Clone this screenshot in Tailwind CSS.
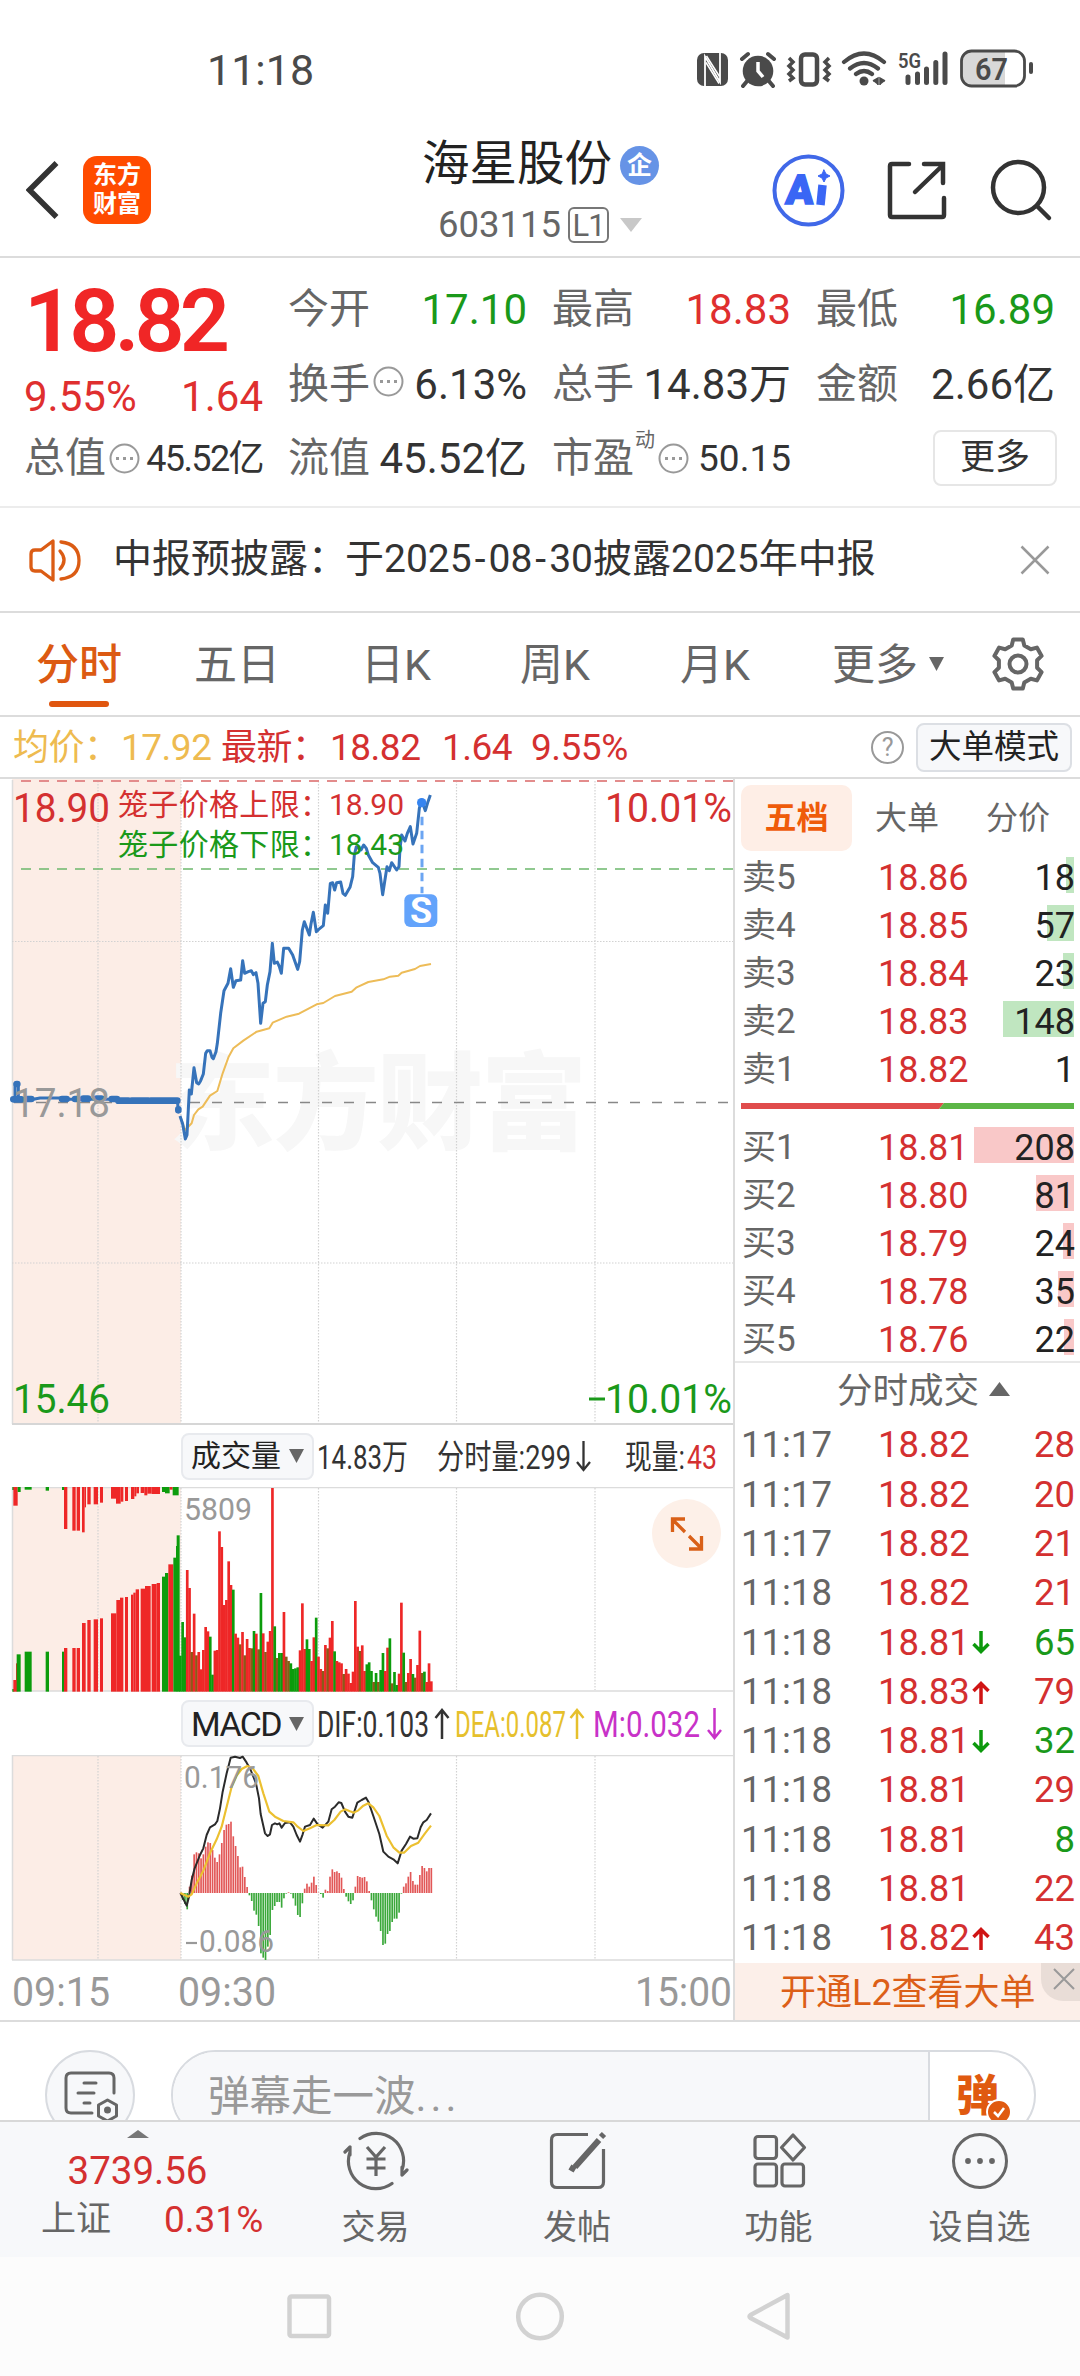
<!DOCTYPE html>
<html lang="zh-CN">
<head>
<meta charset="utf-8">
<title>海星股份 603115</title>
<script src="https://cdn.jsdelivr.net/npm/@tailwindcss/browser@4"></script>
</head>
<body class="w-[1080px] h-[2376px] overflow-hidden bg-white font-[Roboto,'Noto_Sans_CJK_SC',sans-serif] text-[#333] leading-none">
<div class="flex flex-col w-[1080px] h-[2376px] whitespace-nowrap">

<!-- status bar -->
<div class="flex items-center justify-between h-[92px] pt-[48px] pl-[207px] pr-[46px] text-[#4a4a4a] shrink-0">
  <span class="text-[43px]">11:18</span>
  <svg class="w-[340px] h-[44px]" viewBox="694 48 340 44" fill="none" stroke="#4a4a4a">
    <rect x="697" y="53" width="31" height="33" rx="7" fill="#4a4a4a" stroke="none"/>
    <path d="M705 86V56.500L720 82V53" stroke="#fff" stroke-width="1.800"/>
    <path d="M706 62.500l13 21M706.500 56l13 20.500" stroke="#fff" stroke-width="1.500"/>
    <circle cx="758" cy="71" r="15.300" fill="#4a4a4a" stroke="none"/>
    <path d="M742 59l6-5M774 59l-6-5M748 80l-5 6M768 80l5 6" stroke-width="4" stroke-linecap="round"/>
    <path d="M758 62v9l5 6" stroke="#fff" stroke-width="3.500"/>
    <rect x="801" y="54.500" width="16" height="30" rx="4" stroke-width="4.500"/>
    <path d="M789 58l4 4-4 4 4 4-4 4 4 4-4 3M829 58l-4 4 4 4-4 4 4 4-4 4 4 3" stroke-width="3.500"/>
    <path d="M844 62q20-17 40 0M850 68.500q14-11 28 0M856 74q8-6 16 0" stroke-width="4.200" stroke-linecap="round"/>
    <circle cx="864" cy="81" r="4.500" fill="#4a4a4a" stroke="none"/>
    <path d="M873 81l5-3v7M885 81l-5-3v7" fill="#4a4a4a" stroke-width="1.500"/>
    <text x="898" y="68" font-size="21" font-weight="600" fill="#4a4a4a" stroke="none" textLength="23" lengthAdjust="spacingAndGlyphs">5G</text>
    <path d="M908 77v5.500M917.500 74v8.500M926.500 69v13.500M935.800 62.500v20M945 54v28.500" stroke-width="5" stroke-linecap="round"/>
    <path d="M968 52h37v33h-37q-6 0-6-8v-17q0-8 6-8z" fill="#d8d8d8" stroke="none"/>
    <rect x="961.500" y="51" width="63" height="35" rx="10" stroke-width="2.800"/>
    <path d="M1031 64v8" stroke-width="4" stroke-linecap="round"/>
    <text x="975" y="79.500" font-size="31" font-weight="600" fill="#4a4a4a" stroke="none" textLength="33" lengthAdjust="spacingAndGlyphs">67</text>
  </svg>
</div>

<!-- title bar -->
<div class="flex h-[166px] border-b-2 border-[#dcdcdc] shrink-0">
  <div class="flex items-start w-[399px] pt-[64px] pl-[26px]">
    <svg class="w-[34px] h-[70px] mt-[-1px]" viewBox="0 0 34 70" fill="none" stroke="#333" stroke-width="5.500"><path d="M30.500 8L3.500 35l27 27"/></svg>
    <div class="ml-[23px] w-[68px] h-[68px] rounded-[14px] bg-[#ff4b00] text-white font-bold text-[24px] leading-[29px] flex flex-col items-center justify-center"><span>东方</span><span>财富</span></div>
  </div>
  <div class="flex flex-col items-center w-[283px] pt-[49px]">
    <div class="flex items-center h-[48px] text-[47.500px] text-[#222] gap-[8px]"><span>海星股份</span>
      <span class="flex items-center justify-center w-[39px] h-[39px] rounded-full bg-[#6693e6] text-white text-[25px] font-bold">企</span></div>
    <div class="flex items-center mt-[17px] h-[38px] text-[36.500px] text-[#666]">
      <span>603115</span>
      <span class="ml-[7px] w-[41px] h-[36px] border-2 border-[#777] rounded-[6px] text-[31px] leading-[33px] text-center tracking-[-1px]">L1</span>
      <svg class="ml-[10px] w-[24px] h-[16px]" viewBox="0 0 24 16"><path d="M1 1h22L12 15z" fill="#c8c8c8"/></svg>
    </div>
  </div>
  <svg class="w-[330px] h-[100px] mt-[48px] ml-[68px]" viewBox="750 140 330 100" fill="none" stroke="#333" stroke-width="4.500" stroke-linecap="round">
    <circle cx="808.500" cy="190.500" r="34" stroke="#4068e8" stroke-width="4"/>
    <text x="786" y="204" font-family="Roboto" font-size="41" font-weight="900" fill="#3a66f5" stroke="#3a66f5" stroke-width="1.500" transform="skewX(-4)" style="transform-origin:808px 190px">A</text>
    <path d="M822.500 185l-2 20" stroke="#3a66f5" stroke-width="8.500" stroke-linecap="butt"/>
    <path d="M824 170l2 4 4 2-4 2-2 4-2-4-4-2 4-2z" fill="#3a66f5" stroke="#3a66f5" stroke-width="1"/>
    <path d="M909 164h-17q-2 0-2 2v49q0 2 2 2h50q2 0 2-2v-17M924 164h19v19M943 165l-28 27"/>
    <circle cx="1018.500" cy="187.500" r="25.500"/><path d="M1037 206l12 12"/>
  </svg>
</div>

<!-- quote summary -->
<div class="grid grid-cols-[239px_239px_239px_239px] gap-x-[25px] px-[24px] pt-[14px] h-[250px] border-b-2 border-[#ececec] text-[42px] text-[#333] shrink-0">
  <div class="flex flex-col">
    <div class="h-[100px] pt-[6px] text-[88px] leading-[86px] font-semibold text-[#f02626] tracking-[-5px]">18.82</div>
    <div class="flex justify-between items-center h-[50px] text-[#df2f2f]"><span>9.55%</span><span>1.64</span></div>
    <div class="flex items-center h-[73px] text-[36px]"><span class="text-[41px] text-[#666]">总值</span>
      <svg class="w-[31px] h-[31px] ml-[3px]" viewBox="0 0 31 31"><circle cx="15.500" cy="15.500" r="14" fill="none" stroke="#999" stroke-width="2"/><path d="M7 14h3v3h-3zM14 14h3v3h-3zM21 14h3v3h-3z" fill="#999"/></svg>
      <span class="ml-auto tracking-[-1.600px]">45.52亿</span></div>
  </div>
  <div>
    <div class="flex justify-between items-center h-[75px] text-[#1a991a]"><span class="text-[41px] text-[#666]">今开</span><span>17.10</span></div>
    <div class="flex items-center h-[75px]"><span class="text-[41px] text-[#666]">换手</span>
      <svg class="w-[31px] h-[31px] ml-[3px] mt-[-6px]" viewBox="0 0 31 31"><circle cx="15.500" cy="15.500" r="14" fill="none" stroke="#999" stroke-width="2"/><path d="M7 14h3v3h-3zM14 14h3v3h-3zM21 14h3v3h-3z" fill="#999"/></svg>
      <span class="ml-auto">6.13%</span></div>
    <div class="flex justify-between items-center h-[73px]"><span class="text-[41px] text-[#666]">流值</span><span>45.52亿</span></div>
  </div>
  <div>
    <div class="flex justify-between items-center h-[75px] text-[#df2f2f]"><span class="text-[41px] text-[#666]">最高</span><span>18.83</span></div>
    <div class="flex justify-between items-center h-[75px]"><span class="text-[41px] text-[#666]">总手</span><span>14.83万</span></div>
    <div class="flex items-center h-[73px] text-[37px]"><span class="text-[41px] text-[#666]">市盈</span><span class="text-[20px] text-[#666] mt-[-37px] ml-[1px]">动</span>
      <svg class="w-[31px] h-[31px] ml-[3px]" viewBox="0 0 31 31"><circle cx="15.500" cy="15.500" r="14" fill="none" stroke="#999" stroke-width="2"/><path d="M7 14h3v3h-3zM14 14h3v3h-3zM21 14h3v3h-3z" fill="#999"/></svg>
      <span class="ml-auto">50.15</span></div>
  </div>
  <div>
    <div class="flex justify-between items-center h-[75px] text-[#1a991a]"><span class="text-[41px] text-[#666]">最低</span><span>16.89</span></div>
    <div class="flex justify-between items-center h-[75px]"><span class="text-[41px] text-[#666]">金额</span><span>2.66亿</span></div>
    <div class="flex items-center justify-end h-[72px]"><span class="w-[124px] h-[56px] mr-[-2px] border-2 border-[#e6e6e6] rounded-[8px] text-[35px] leading-[51px] text-center">更多</span></div>
  </div>
</div>

<!-- notice -->
<div class="flex items-center h-[105px] border-b-2 border-[#dcdcdc] pl-[28px] pr-[30px] shrink-0">
  <svg class="w-[54px] h-[46px]" viewBox="28 536 54 46" fill="none" stroke="#db5c14" stroke-width="3.300" stroke-linejoin="round"><path d="M41 549h-6q-4 0-4 4v13q0 4 4 4h6l12 9v-39z"/><path d="M60 550q8 9 0 18M61 541q18 2 18 18.500t-18 18.500" stroke-linecap="round"/></svg>
  <span class="ml-[31px] text-[39px]">中报预披露：<span class="ml-[-2px]">于</span>2025<span class="mx-[3px]">-</span>08<span class="mx-[3px]">-</span>30披露2025年中报</span>
  <svg class="ml-auto w-[30px] h-[30px]" viewBox="0 0 30 30" stroke="#999" stroke-width="2.500"><path d="M1.500 1.500l27 27M28.500 1.500l-27 27"/></svg>
</div>

<!-- period tabs -->
<div class="flex items-center h-[104px] border-b-2 border-[#dcdcdc] pt-[2px] pl-[36px] text-[43px] text-[#666] shrink-0">
  <span class="relative w-[158px] text-[#dc5a12] font-medium">分时<span class="absolute left-[13px] top-[57px] w-[60px] h-[6px] rounded-full bg-[#e0560f]"></span></span>
  <span class="w-[167px]">五日</span><span class="w-[159px]">日K</span><span class="w-[160px]">周K</span><span class="w-[152px]">月K</span><span class="w-[97px]">更多</span>
  <svg class="w-[15px] h-[14px] mt-[-2px]" viewBox="0 0 15 14"><path d="M0 0h15L7.500 14z" fill="#666"/></svg>
  <svg class="ml-[47px] w-[54px] h-[54px] mt-[-2px]" viewBox="-27 -27 54 54" fill="none" stroke="#666" stroke-width="4" stroke-linejoin="round"><path id="gear" d=""/><circle r="8.500"/></svg>
</div>

<!-- averages -->
<div class="flex items-center h-[62px] pt-[1px] pl-[13px] pr-[8px] text-[37px] text-[#d43030] tracking-[-0.500px] border-b-2 border-[#dcdcdc] shrink-0">
  <span class="w-[108px] text-[36px] text-[#eebb50]">均价：</span><span class="w-[100px] text-[#eebb50]">17.92</span>
  <span class="w-[109px] text-[36px]">最新：</span><span class="w-[112px]">18.82</span><span class="w-[89px]">1.64</span><span>9.55%</span>
  <span class="ml-auto flex items-center justify-center w-[33px] h-[33px] rounded-full border-2 border-[#999] text-[#999] text-[25px]">?</span>
  <span class="ml-[12px] w-[156px] h-[49px] rounded-[8px] border-2 border-[#dcdfe4] bg-[#f7f8fa] text-[32.500px] leading-[44px] tracking-normal text-center text-[#222]">大单模式</span>
</div>

<!-- charts and order book -->
<div class="flex h-[1243px] border-b-2 border-[#dcdcdc] shrink-0">
  <div class="w-[735px] flex flex-col border-r-2 border-[#dcdcdc] shrink-0">
    <svg class="w-[733px] h-[646px] shrink-0" viewBox="0 779 733 646" fill="none">
      <rect x="12" y="779" width="169" height="645" fill="#fcede6"/>
      <path d="M12.500 780v644" stroke="#dcdcdc" stroke-width="1.500"/>
      <text x="169" y="1141" font-family="'Noto Sans CJK SC'" font-weight="900" font-size="106" fill="#f7f7f7" textLength="418">东方财富</text>
      <path d="M98 781v642M181 781v642M318.500 781v642M456.500 781v642M595 781v642M12 941.500h721M12 1263h721" stroke="#d2d2d2" stroke-width="1.200" stroke-dasharray="1.500 1.500"/>
      <path d="M21 781h712" stroke="#e38c8c" stroke-width="2" stroke-dasharray="10 8"/>
      <path d="M21 869h712" stroke="#6cb86c" stroke-width="1.600" stroke-dasharray="10 8"/>
      <path d="M14 1102.500h719" stroke="#888" stroke-width="1.600" stroke-dasharray="10 12"/>
      <path d="M12 1424h721" stroke="#d6d6d6" stroke-width="2"/>
      <g transform="translate(0 770) scale(.33333)" stroke-linejoin="round">
        <path d="M37 988H55V940H45V988H100L120 984H180L210 988H345L360 992H532L535 1020" stroke="#3673ba" stroke-width="9"/>
        <path d="M50 942h2M40 988h24M82 987h12M186 987h14M225 987h8M250 986h14M290 986h14M335 987h16M355 992h30M395 992h50M452 992h80M535 1018v3" stroke="#3673ba" stroke-width="20" stroke-linecap="round"/>
        <polyline points="541,1040 555,1080 575,1060 582,1035 595,1018 608,1010 630,977 652,963 668,910 686,860 700,835 730,812 770,785 808,775 818,758 860,740 897,731 950,703 970,699 1005,678 1055,665 1070,652 1105,636 1150,628 1170,620 1195,617 1205,608 1245,597 1260,588 1293,582" stroke="#edbc58" stroke-width="6"/>
        <polyline points="540,1038 548,1062 556,1107 561,1095 568,960 574,972 582,893 590,938 596,942 602,932 610,912 617,850 622,842 630,842 636,862 640,866 648,845 652,820 662,730 672,662 684,640 692,596 700,652 708,632 722,630 728,572 734,610 745,605 754,602 760,614 768,608 774,640 782,760 789,700 796,695 802,645 810,605 817,520 823,580 832,576 838,590 844,610 851,535 866,535 878,555 893,598 899,575 907,480 913,455 928,495 933,462 940,427 949,485 956,478 970,467 976,405 983,430 991,340 998,338 1004,360 1010,338 1022,336 1029,370 1036,376 1050,352 1058,320 1063,255 1069,230 1083,240 1091,225 1099,235 1105,255 1118,278 1135,292 1140,310 1148,374 1154,335 1161,290 1168,302 1175,278 1190,300 1197,290 1200,235 1205,195 1215,213 1222,190 1231,170 1239,222 1250,190 1258,115 1265,90 1276,122 1284,95 1291,75" stroke="#3673ba" stroke-width="9"/>
        <circle cx="1265" cy="98" r="14" fill="#3584f0"/>
        <path d="M1266 140V370" stroke="#6ba5f2" stroke-width="9" stroke-dasharray="26 16"/>
        <rect x="1213" y="373" width="99" height="98" rx="18" fill="#63a3fb"/>
      </g>
      <g font-family="Roboto,'Noto Sans CJK SC'">
        <text x="421" y="923" text-anchor="middle" font-size="36" font-weight="700" fill="#fff">S</text>
        <g font-size="40">
          <text x="13" y="822" fill="#d43030" textLength="97" lengthAdjust="spacingAndGlyphs">18.90</text>
          <text x="605" y="822" fill="#d43030" textLength="127" lengthAdjust="spacingAndGlyphs">10.01%</text>
          <text x="13" y="1117" fill="#999" textLength="97" lengthAdjust="spacingAndGlyphs">17.18</text>
          <text x="13" y="1413" fill="#1a991a" textLength="97" lengthAdjust="spacingAndGlyphs">15.46</text>
          <text x="605" y="1413" fill="#1a991a" textLength="127" lengthAdjust="spacingAndGlyphs">10.01%</text>
          <path d="M589 1399h16" stroke="#1a991a" stroke-width="3"/>
        </g>
        <g font-size="30">
          <text x="118" y="815" fill="#d43030" textLength="212">笼子价格上限：</text><text x="329" y="815" fill="#d43030" textLength="75">18.90</text>
          <text x="118" y="855" fill="#1a991a" textLength="212">笼子价格下限：</text><text x="329" y="855" fill="#1a991a" textLength="75">18.43</text>
        </g>
      </g>
    </svg>

    <div class="flex items-center h-[62px] pl-[181px] shrink-0">
      <div class="flex items-center justify-between w-[133px] h-[47px] px-[8px] rounded-[8px] border-2 border-[#e8eaee] bg-[#f7f8fa] text-[30px] text-[#222]"><span>成交量</span><svg class="w-[15px] h-[14px]" viewBox="0 0 15 14"><path d="M0 0h15L7.500 14z" fill="#666"/></svg></div>
      <svg class="w-[415px] h-[60px]" viewBox="314 1425 415 60" font-family="Roboto,'Noto Sans CJK SC'" font-size="34" fill="#333">
        <text x="317" y="1468" textLength="91" lengthAdjust="spacingAndGlyphs">14.83万</text>
        <text x="437" y="1468" textLength="134" lengthAdjust="spacingAndGlyphs">分时量:299</text>
        <path d="M583.500 1440v29M577 1461l6.500 8 6.500-8" fill="none" stroke="#333" stroke-width="2.300"/>
        <text x="625" y="1468" textLength="60" lengthAdjust="spacingAndGlyphs">现量:</text>
        <text x="687" y="1468" fill="#d43030" textLength="30" lengthAdjust="spacingAndGlyphs">43</text>
      </svg>
    </div>

    <div class="relative h-[205px] shrink-0">
      <svg class="w-[733px] h-[205px]" viewBox="0 1487 733 205" fill="none">
        <rect x="12" y="1487" width="169" height="204" fill="#fcede6"/>
        <path d="M12.500 1487v204M12 1487.500h721M12 1691h721" stroke="#dcdcdc" stroke-width="1.500"/>
        <path d="M98 1488v202M181 1488v202M318.500 1488v202M456.500 1488v202M595 1488v202" stroke="#d2d2d2" stroke-width="1.200" stroke-dasharray="1.500 1.500"/>
        <g id="volume" transform="translate(0 1470) scale(.33333)"></g>
        <text x="184" y="1520" font-family="Roboto" font-size="31" fill="#999" textLength="68" lengthAdjust="spacingAndGlyphs">5809</text>
      </svg>
      <div class="absolute left-[652px] top-[12px] w-[69px] h-[69px] rounded-full bg-[#fdf0e8] flex items-center justify-center">
        <svg class="w-[36px] h-[36px]" viewBox="0 0 36 36" fill="none" stroke="#d96018" stroke-width="3.300"><path d="M16 3H3.500v13M4 4l12 12M20 33h12.500V20M32 32L20 20"/></svg>
      </div>
    </div>

    <div class="flex items-center h-[63px] pl-[181px] shrink-0">
      <div class="flex items-center justify-between w-[133px] h-[47px] px-[8px] rounded-[8px] border-2 border-[#e8eaee] bg-[#f7f8fa] text-[34px] tracking-[-1.600px] text-[#222]"><span>MACD</span><svg class="w-[15px] h-[14px]" viewBox="0 0 15 14"><path d="M0 0h15L7.500 14z" fill="#666"/></svg></div>
      <svg class="w-[415px] h-[60px]" viewBox="314 1693 415 60" font-family="Roboto" font-size="37" fill="#333">
        <text x="317" y="1736" textLength="112" lengthAdjust="spacingAndGlyphs">DIF:0.103</text>
        <text x="455" y="1736" fill="#e6c02c" textLength="111" lengthAdjust="spacingAndGlyphs">DEA:0.087</text>
        <text x="593" y="1736" fill="#c832c8" textLength="107" lengthAdjust="spacingAndGlyphs">M:0.032</text>
        <g fill="none" stroke-width="2.500"><path d="M442 1738v-29M435.500 1717l6.500-8 6.500 8" stroke="#333"/><path d="M577 1738v-29M570.500 1717l6.500-8 6.500 8" stroke="#e6c02c"/><path d="M714.500 1707v29M708 1729l6.500 8 6.500-8" stroke="#c832c8"/></g>
      </svg>
    </div>

    <svg class="w-[733px] h-[265px] shrink-0" viewBox="0 1755 733 265" fill="none">
      <rect x="12" y="1755" width="169" height="205" fill="#fcede6"/>
      <path d="M12.500 1755v205M12 1755.500h721M12 1960h721" stroke="#dcdcdc" stroke-width="1.500"/>
      <path d="M98 1756v203M181 1756v203M318.500 1756v203M456.500 1756v203M595 1756v203" stroke="#d2d2d2" stroke-width="1.200" stroke-dasharray="1.500 1.500"/>
      <g transform="translate(0 1740) scale(.33333)" stroke-linejoin="round">
        <g id="macd"></g>
        <polyline points="541,459 560,497 567,470 575,420 584,385 600,345 610,325 620,285 630,262 645,253 652,243 660,205 668,155 680,100 692,53 705,50 720,54 728,50 740,68 752,90 768,130 777,175 782,222 795,280 803,288 810,283 816,255 825,250 832,253 838,250 845,263 855,249 870,247 880,260 890,285 900,305 908,283 915,260 930,255 941,236 953,253 968,263 985,245 995,208 1005,200 1016,187 1024,189 1035,215 1045,230 1057,233 1072,188 1085,180 1098,173 1106,187 1120,228 1138,282 1150,335 1165,350 1180,358 1193,370 1205,332 1218,312 1230,290 1240,296 1252,295 1262,262 1270,247 1280,240 1293,220" stroke="#2b2b2b" stroke-width="6"/>
        <polyline points="541,459 565,470 575,463 590,430 610,392 632,335 650,298 665,260 680,200 695,140 710,107 725,87 742,78 758,85 775,108 790,160 808,215 825,230 850,243 880,247 893,260 910,273 930,265 950,255 985,256 1003,240 1022,215 1035,208 1050,214 1062,218 1075,211 1090,197 1105,190 1120,202 1138,228 1160,287 1180,322 1198,338 1212,338 1233,318 1255,308 1275,280 1293,257" stroke="#ecc030" stroke-width="6.500"/>
      </g>
      <g font-family="Roboto" fill="#999">
        <g font-size="31"><text x="184" y="1788" textLength="75" lengthAdjust="spacingAndGlyphs">0.176</text><text x="199" y="1952" textLength="75" lengthAdjust="spacingAndGlyphs">0.086</text></g>
        <path d="M186 1943h11" stroke="#999" stroke-width="2.200"/>
        <g font-size="40"><text x="12" y="2006" textLength="98" lengthAdjust="spacingAndGlyphs">09:15</text><text x="178" y="2006" textLength="98" lengthAdjust="spacingAndGlyphs">09:30</text><text x="635" y="2006" textLength="97" lengthAdjust="spacingAndGlyphs">15:00</text></g>
      </g>
    </svg>
  </div>

  <!-- order book -->
  <div class="w-[345px] flex flex-col shrink-0">
    <div class="flex pt-[6px] h-[73px] pl-[6px] text-[32px] leading-[67px] text-[#666] shrink-0">
      <span class="w-[111px] h-[66px] rounded-[10px] bg-[#feeee6] text-[#ef5b0a] font-bold text-center">五档</span><span class="ml-[23px]">大单</span><span class="ml-[47px]">分价</span>
    </div>
    <div id="asks"></div>
    <svg class="mt-[11px] mb-[13px] ml-[6px] w-[333px] h-[6px] shrink-0" viewBox="0 0 333 6"><path d="M0 0h203l-5 6H0z" fill="#e04c4c"/><path d="M203 0h130v6H198z" fill="#5cb646"/></svg>
    <div id="bids"></div>
    <div class="flex items-center gap-[10px] h-[60px] border-t-2 border-[#e8e8e8] text-[35.500px] text-[#666] pl-[102px] mt-[-1px] shrink-0"><span>分时成交</span><svg class="w-[21px] h-[14px] mb-[7px]" viewBox="0 0 21 14"><path d="M0 14L10.500 0 21 14z" fill="#666"/></svg></div>
    <div id="trades"></div>
    <div class="relative flex-1 flex items-center bg-[#fcefe9] pt-[2px] pl-[45px] text-[36px] text-[#dc5f18]"><span>开通L2查看大单</span>
      <span class="absolute right-0 top-0 w-[39px] h-[38px] rounded-bl-[22px] bg-[#e9ddd7] flex items-center justify-center"><svg class="w-[22px] h-[22px] mt-[-6px] ml-[6px]" viewBox="0 0 22 22" stroke="#999" stroke-width="2"><path d="M1 1l20 20M21 1L1 21"/></svg></span>
    </div>
  </div>
</div>

<!-- comment bar -->
<div class="flex items-start h-[98px] pt-[28px] pl-[45px] overflow-hidden shrink-0">
  <div class="w-[90px] h-[90px] rounded-full border-2 border-[#d8dbe0] bg-[#f7f8fa] shrink-0">
    <svg class="w-[86px] h-[86px]" viewBox="47 2052 86 86" fill="none" stroke="#666" stroke-width="3" stroke-linecap="round" stroke-linejoin="round"><path d="M92 2113H71q-5 0-5-5v-30q0-5 5-5h38q5 0 5 5v15M84 2083h12M78 2093h16M84 2103h6"/><path d="M107.500 2100l9 5v11l-9 5-9-5v-11z"/><circle cx="107.500" cy="2110" r="2" fill="#666"/></svg>
  </div>
  <div class="ml-[36px] flex w-[865px] h-[90px] rounded-full border-2 border-[#d8dbe0] overflow-hidden shrink-0">
    <div class="w-[757px] h-full bg-[#f7f8fa] border-r-2 border-[#d8dbe0] pl-[35px] text-[41.500px] leading-[89px] text-[#999]">弹幕走一波<span class="tracking-[4px]">...</span></div>
    <div class="pl-[26px] relative text-[43px] leading-[88px] font-black text-[#e05a10]">弹<svg class="absolute left-[56px] top-[47px] w-[26px] h-[26px]" viewBox="-13 -13 26 26"><circle r="12" fill="#e05a10" stroke="#fff" stroke-width="2"/><path d="M-5 0l4 4 6-8" fill="none" stroke="#fff" stroke-width="2.500"/></svg></div>
  </div>
</div>

<!-- toolbar -->
<div class="flex h-[137px] border-t-2 border-[#d8d8d8] bg-[#f7f8fa] text-[34px] text-[#666] shrink-0">
  <div class="w-[275px] flex flex-col items-center pt-[8px]">
    <svg class="w-[22px] h-[8px]" viewBox="0 0 22 8"><path d="M0 8L11 0l11 8z" fill="#777"/></svg>
    <span class="mt-[14px] text-[38.500px] text-[#d43030]">3739.56</span>
    <div class="flex w-full pl-[41px] mt-[10px] items-center h-[38px]"><span class="text-[35px]">上证</span><span class="ml-[53px] text-[37px] text-[#d43030]">0.31%</span></div>
  </div>
  <div class="w-[201px] flex flex-col items-center pt-[7px]">
    <svg class="w-[66px] h-[64px]" viewBox="-33 -32 66 64" fill="none" stroke="#666" stroke-width="3.200" stroke-linecap="round"><path d="M-16 -22.500A27.500 27.500 0 0 1 26 9M26 14l5-5M26 14v-8M16 22.500A27.500 27.500 0 0 1-26 -9M-26 -14l-5 5M-26 -14v8"/><path d="M-9 -14L0 -4 9 -14M0 -4V15M-9.500 -2h19M-9.500 7h19" stroke-linecap="butt"/></svg>
    <span class="mt-[17px]">交易</span>
  </div>
  <div class="w-[202px] flex flex-col items-center pt-[7px]">
    <svg class="w-[66px] h-[64px]" viewBox="-33 -32 66 64" fill="none" stroke="#666" stroke-width="3.200"><path d="M11 -26.500H-20q-5.500 0-5.500 5.500v42q0 5.500 5.500 5.500h41q5.500 0 5.500-5.500V-12"/><path d="M22 -21L-2 6M-6 10l3-5" stroke-width="6"/><path d="M24 -24l3-3" stroke-width="6"/></svg>
    <span class="mt-[17px]">发帖</span>
  </div>
  <div class="w-[201px] flex flex-col items-center pt-[7px]">
    <svg class="w-[66px] h-[64px]" viewBox="-33 -32 66 64" fill="none" stroke="#666" stroke-width="3.200" stroke-linejoin="round"><rect x="-24" y="-24.500" width="21.500" height="22" rx="3"/><rect x="-24" y="3" width="21.500" height="22" rx="3"/><rect x="3" y="3" width="21.500" height="22" rx="3"/><path d="M14 -26l11.500 12.500L14 -1 2.500 -13.500z"/></svg>
    <span class="mt-[17px]">功能</span>
  </div>
  <div class="w-[201px] flex flex-col items-center pt-[7px]">
    <svg class="w-[66px] h-[64px]" viewBox="-33 -32 66 64" fill="none" stroke="#666" stroke-width="3"><circle r="26.500"/><g fill="#666" stroke="none"><circle cx="-12" r="2.900"/><circle r="2.900"/><circle cx="12" r="2.900"/></g></svg>
    <span class="mt-[17px]">设自选</span>
  </div>
</div>

<!-- system navigation -->
<div class="flex-1 bg-[#fcfcfc]">
  <svg class="w-[1080px] h-[120px]" viewBox="0 2256 1080 120" fill="none" stroke="#d2d2d2" stroke-width="4.500" stroke-linejoin="round"><rect x="289.500" y="2295.500" width="39.500" height="39.500" rx="2"/><circle cx="540" cy="2315.500" r="21.800"/><path d="M787.500 2294v42.500L750.500 2317q-2-1.500 0-3z"/></svg>
</div>
</div>

<script>
const NS = 'http://www.w3.org/2000/svg';
const C = {R: '#ee2727', G: '#0c9c0c', B: '#8c5a18'};
function rect(parent, x, y, w, h, fill) {
  const r = document.createElementNS(NS, 'rect');
  for (const [k, v] of Object.entries({x, y, width: w, height: h, fill})) r.setAttribute(k, v);
  parent.appendChild(r);
}

// settings gear outline
let pts = [];
for (let i = 0; i < 6; i++) {
  for (const [da, r] of [[-19, 19.5], [-11, 25], [11, 25], [19, 19.5]]) {
    const a = (i * 60 - 90 + da) * Math.PI / 180;
    pts.push((r * Math.cos(a)).toFixed(1) + ' ' + (r * Math.sin(a)).toFixed(1));
  }
}
document.getElementById('gear').setAttribute('d', 'M' + pts.join('L') + 'Z');

// call auction: matched volume below, unmatched volume hanging from the top
const vol = document.getElementById('volume');
const unmatched = 'G37,43,60 R40,53,107 G53,62,66 G74,95,59 G137,147,62 G186,192,60 R192,202,177 R217,227,182 R230,240,182 R246,254,187 R254,258,112 R262,272,103 R281,294,103 R300,309,98 R333,348,86 R348,362,101 R362,370,95 R375,384,93 R393,403,87 R403,409,79 R409,417,70 R422,433,69 R433,442,76 R442,455,71 R455,480,72 G486,495,66 G495,509,70 R509,518,59 G518,536,76';
const matched = 'G37,43,657 R40,48,630 R48,52,580 G50,62,553 G74,95,545 G137,147,545 G186,192,545 R192,202,534 R217,227,534 R230,240,534 R246,257,459 R262,272,450 R281,294,448 R300,309,445 R333,349,430 R349,360,390 R360,370,383 R375,384,381 R393,400,374 R400,407,368 R407,417,358 R422,435,356 R435,452,348 R455,470,342 R470,480,339 G486,495,320 G495,505,309 R505,520,283 G520,528,263 G528,532,228 G530,539,196';
unmatched.split(' ').forEach(s => { const [a, b, y] = s.slice(1).split(',').map(Number); rect(vol, a, 51, b - a, y - 51, C[s[0]]); });
matched.split(' ').forEach(s => { const [a, b, y] = s.slice(1).split(',').map(Number); rect(vol, a, y, b - a, 665 - y, C[s[0]]); });

// minute volume
const minute = 'G557 G456 G502 R300 R354 B546 R431 B556 R546 R598 R540 R471 R484 G500 G614 R542 R540 R184 R231 R405 R390 R274 R345 G359 R491 R503 B523 R486 B556 R507 R534 B535 G483 R491 B538 G369 R490 B546 R515 R483 R54 G469 B564 G549 G549 R426 B560 B573 G580 G597 G595 G592 R541 R400 R537 G508 G537 R573 R502 G443 R560 R597 B603 R525 B535 R503 R453 G544 R573 R577 R580 B612 R597 R611 R639 R605 R393 R530 B543 R526 R603 G583 G577 G603 B636 G609 B636 G600 G549 R603 R533 G505 B640 G606 G645 R611 R398 G548 B636 R609 R567 G612 B623 R585 R482 B609 G605 R636 R580 R634';
minute.split(' ').forEach((s, i, all) => { const y = +s.slice(1); rect(vol, 541 + i * 753 / (all.length - 1) - 4, y, 8, 665 - y, C[s[0]]); });

// MACD histogram
const macd = document.getElementById('macd');
[459,480,492,508,440,407,343,337,340,355,343,320,307,309,330,353,366,343,309,270,254,252,245,289,318,348,382,380,411,441,466,483,512,524,558,640,653,660,620,585,510,498,486,486,503,475,461,457,461,475,497,525,531,490,446,431,440,428,410,435,458,462,473,449,453,410,388,396,394,399,413,447,470,484,492,481,440,408,411,413,411,424,453,481,508,530,545,573,615,611,582,573,546,536,536,518,461,440,430,410,396,423,434,434,405,378,384,394,384,384]
  .forEach((y, i, all) => { const x = 541 + i * 753 / (all.length - 1) - 2.5; rect(macd, x, Math.min(y, 459), 5, Math.abs(y - 459), y < 459 ? '#e25757' : '#3aa83a'); });

// order book rows
function book(id, rows, color) {
  document.getElementById(id).innerHTML = rows.map(([n, p, q, w]) => `
    <div class="relative flex items-center h-[48px] pt-[3px] pl-[7px] pr-[5px] text-[36px]">
      <span class="absolute right-[6px] top-[5px] h-[36px] ${color}" style="width:${w}px"></span>
      <span class="w-[136px] text-[#666] text-[35px]"><span class="text-[34px]">${n[0]}</span>${n[1]}</span>
      <span class="text-[#d43030]">${p}</span><span class="relative ml-auto text-[#222]">${q}</span>
    </div>`).join('');
}
book('asks', [['卖5', '18.86', 18, 8], ['卖4', '18.85', 57, 27], ['卖3', '18.84', 23, 11], ['卖2', '18.83', 148, 71], ['卖1', '18.82', 1, 0]], 'bg-[#c0e6c0]');
book('bids', [['买1', '18.81', 208, 100], ['买2', '18.80', 81, 38], ['买3', '18.79', 24, 11], ['买4', '18.78', 35, 16], ['买5', '18.76', 22, 10]], 'bg-[#f9c8c8]');

// tick list
const up = '<svg class="w-[18px] h-[23px] ml-[2px]" viewBox="0 0 18 23" fill="none" stroke="#d01414" stroke-width="3.5"><path d="M9 23V3M1.500 10L9 2.500l7.500 7.500"/></svg>';
const down = '<svg class="w-[18px] h-[23px] ml-[2px]" viewBox="0 0 18 23" fill="none" stroke="#0c990c" stroke-width="3.5"><path d="M9 0V20M1.500 13L9 20.500l7.500-7.500"/></svg>';
document.getElementById('trades').innerHTML = [
  ['11:17', '18.82', 28, ''], ['11:17', '18.82', 20, ''], ['11:17', '18.82', 21, ''], ['11:18', '18.82', 21, ''],
  ['11:18', '18.81', 65, 'd'], ['11:18', '18.83', 79, 'u'], ['11:18', '18.81', 32, 'd'], ['11:18', '18.81', 29, ''],
  ['11:18', '18.81', 8, 'g'], ['11:18', '18.81', 22, ''], ['11:18', '18.82', 43, 'u']
].map(([t, p, q, f]) => `
  <div class="flex items-center h-[49.3px] pl-[6px] pr-[5px] text-[36.5px] text-[#d43030]">
    <span class="w-[137px] text-[#666]">${t}</span><span>${p}</span>${f === 'u' ? up : f === 'd' ? down : ''}
    <span class="ml-auto ${f === 'd' || f === 'g' ? 'text-[#1a991a]' : ''}">${q}</span>
  </div>`).join('');
</script>
</body>
</html>
